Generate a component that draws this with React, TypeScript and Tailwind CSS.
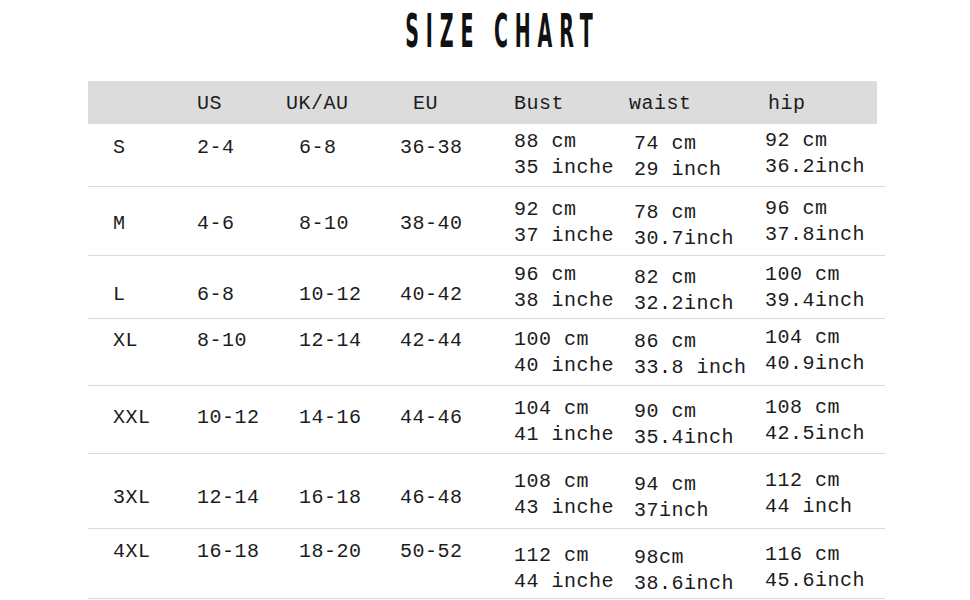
import React from "react";

type Row = {
  size: string;
  us: string;
  uk: string;
  eu: string;
  bust: [string, string];
  waist: [string, string];
  hip: [string, string];
  h: string;
  left: string;
  b: string;
  w: string;
  hp: string;
};

const rows: Row[] = [
  { size: "S", us: "2-4", uk: "6-8", eu: "36-38", bust: ["88 cm", "35 inche"], waist: ["74 cm", "29 inch"], hip: ["92 cm", "36.2inch"], h: "h-[63px]", left: "pt-[11px]", b: "pt-[5px]", w: "pt-[7px]", hp: "pt-[4px]" },
  { size: "M", us: "4-6", uk: "8-10", eu: "38-40", bust: ["92 cm", "37 inche"], waist: ["78 cm", "30.7inch"], hip: ["96 cm", "37.8inch"], h: "h-[69px]", left: "pt-[24px]", b: "pt-[10px]", w: "pt-[13px]", hp: "pt-[9px]" },
  { size: "L", us: "6-8", uk: "10-12", eu: "40-42", bust: ["96 cm", "38 inche"], waist: ["82 cm", "32.2inch"], hip: ["100 cm", "39.4inch"], h: "h-[63px]", left: "pt-[26px]", b: "pt-[6px]", w: "pt-[9px]", hp: "pt-[6px]" },
  { size: "XL", us: "8-10", uk: "12-14", eu: "42-44", bust: ["100 cm", "40 inche"], waist: ["86 cm", "33.8 inch"], hip: ["104 cm", "40.9inch"], h: "h-[67px]", left: "pt-[9px]", b: "pt-[8px]", w: "pt-[10px]", hp: "pt-[6px]" },
  { size: "XXL", us: "10-12", uk: "14-16", eu: "44-46", bust: ["104 cm", "41 inche"], waist: ["90 cm", "35.4inch"], hip: ["108 cm", "42.5inch"], h: "h-[68px]", left: "pt-[19px]", b: "pt-[10px]", w: "pt-[13px]", hp: "pt-[9px]" },
  { size: "3XL", us: "12-14", uk: "16-18", eu: "46-48", bust: ["108 cm", "43 inche"], waist: ["94 cm", "37inch"], hip: ["112 cm", "44 inch"], h: "h-[75px]", left: "pt-[31px]", b: "pt-[15px]", w: "pt-[18px]", hp: "pt-[14px]" },
  { size: "4XL", us: "16-18", uk: "18-20", eu: "50-52", bust: ["112 cm", "44 inche"], waist: ["98cm", "38.6inch"], hip: ["116 cm", "45.6inch"], h: "h-[70px]", left: "pt-[10px]", b: "pt-[14px]", w: "pt-[16px]", hp: "pt-[13px]" },
];

function Two({ lines, pad }: { lines: [string, string]; pad: string }) {
  return (
    <div className={`${pad} flex flex-col whitespace-pre`}>
      <span>{lines[0]}</span>
      <span>{lines[1]}</span>
    </div>
  );
}

export default function App() {
  return (
    <div className="w-[970px] h-[600px] bg-white overflow-hidden text-[#1c1c1c]">
      <div className="flex justify-center pl-[34px] pt-[8px]">
        <div
          className="inline-block origin-center scale-x-[0.46] text-[46px] leading-[46px] font-bold tracking-[15px] text-[#111] whitespace-pre"
          style={{ fontFamily: '"DejaVu Sans Condensed", "DejaVu Sans", sans-serif' }}
        >
          SIZE CHART
        </div>
      </div>

      <div
        className="ml-[88px] mt-[27px] w-[797px] text-[20px] leading-[26px] tracking-[0.5px]"
        style={{ fontFamily: '"Liberation Mono", "DejaVu Sans Mono", monospace' }}
      >
        <div className="w-[789px] h-[43px] bg-[#dcdcdc] pl-[109px] grid grid-cols-[89px_127px_101px_115px_139px_1fr] items-center pt-[3px]">
          <span>US</span>
          <span>UK/AU</span>
          <span>EU</span>
          <span>Bust</span>
          <span>waist</span>
          <span>hip</span>
        </div>

        {rows.map((r) => (
          <div
            key={r.size}
            className={`${r.h} border-b border-[#d9d9d9] pl-[25px] grid grid-cols-[84px_102px_101px_114px_120px_131px_1fr] items-start whitespace-pre`}
          >
            <span className={r.left}>{r.size}</span>
            <span className={r.left}>{r.us}</span>
            <span className={r.left}>{r.uk}</span>
            <span className={r.left}>{r.eu}</span>
            <Two lines={r.bust} pad={r.b} />
            <Two lines={r.waist} pad={r.w} />
            <Two lines={r.hip} pad={r.hp} />
          </div>
        ))}
      </div>
    </div>
  );
}
